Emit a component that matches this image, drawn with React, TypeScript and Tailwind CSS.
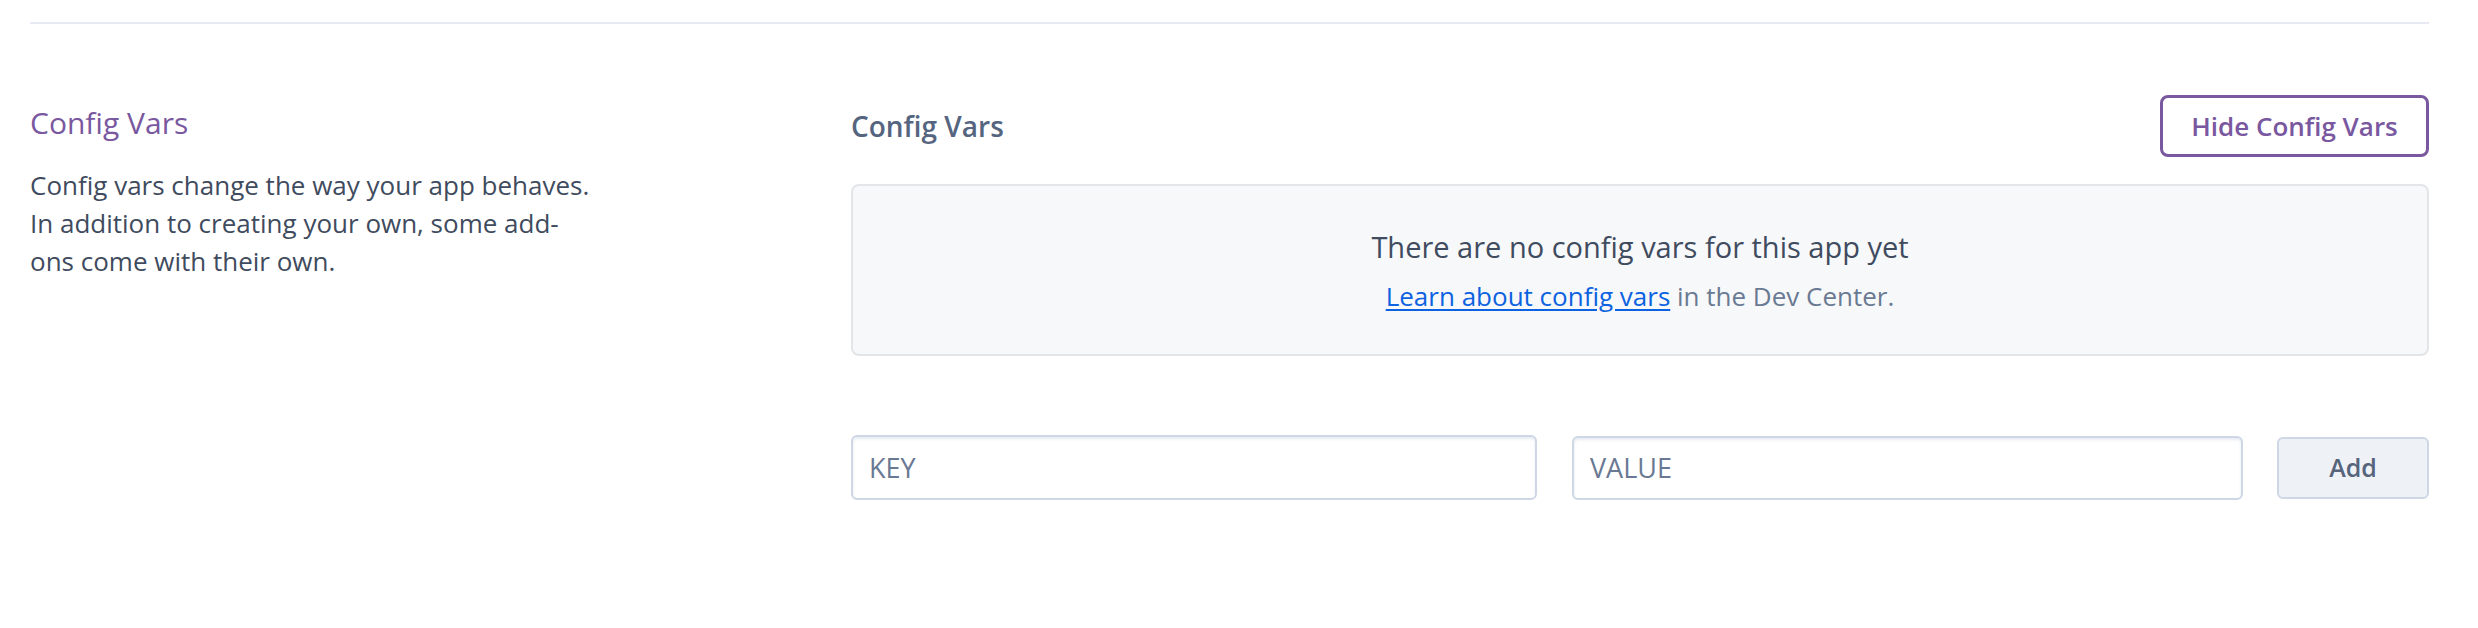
import React from 'react';

const font = { fontFamily: '"Open Sans", Lato, sans-serif' };

export default function App() {
  return (
    <div className="w-full min-h-[628px] bg-white pl-[30px] pr-[49px] pt-[22px]" style={font}>
      {/* top divider */}
      <div className="h-[2px] w-full bg-[#e7eaf4]" />

      <div className="mt-[71px] flex">
        {/* description column */}
        <div className="w-[821px] shrink-0 pt-[9px]">
          <h2 className="text-[30px] leading-[38px] font-normal text-[#79589f]">Config Vars</h2>
          <p className="mt-[24px] w-[560px] text-[26px] leading-[38px] text-[#3f4b5e]">
            Config vars change the way your app behaves. In addition to creating your own, some add-ons come with their own.
          </p>
        </div>

        {/* config vars panel */}
        <div className="flex-1 min-w-0">
          <div className="flex items-center justify-between">
            <h3 className="text-[28px] leading-[34px] font-semibold text-[#56657f]">Config Vars</h3>
            <button className="h-[62px] w-[269px] rounded-[8px] border-[3px] border-[#79589f] bg-white text-[26px] font-semibold text-[#79589f]">
              Hide Config Vars
            </button>
          </div>

          <div className="mt-[27px] flex h-[172px] flex-col items-center justify-center rounded-[8px] border-2 border-[#e3e5e9] bg-[#f7f8fa]">
            <p className="text-[29px] leading-[40px] text-[#3f4b5e]">There are no config vars for this app yet</p>
            <p className="mt-[11px] text-[26px] leading-[36px] text-[#6a7a92]">
              <a href="#" className="text-[#0c62e0] underline underline-offset-[3px]">Learn about config vars</a> in the Dev Center.
            </p>
          </div>

          <div className="mt-[79px] flex items-center">
            <input
              placeholder="KEY"
              className="h-[65px] w-[686px] rounded-[6px] border-2 border-[#cfd7e6] bg-white px-[16px] text-[27px] text-[#3f4b5e] placeholder:text-[#6a7993] shadow-[inset_0_2px_3px_rgba(207,215,230,0.5)] outline-none"
              style={font}
            />
            <input
              placeholder="VALUE"
              className="ml-[35px] h-[64px] flex-1 min-w-0 rounded-[6px] border-2 border-[#cfd7e6] bg-white px-[16px] text-[27px] text-[#3f4b5e] placeholder:text-[#6a7993] shadow-[inset_0_2px_3px_rgba(207,215,230,0.5)] outline-none"
              style={font}
            />
            <button className="ml-[34px] h-[62px] w-[152px] rounded-[6px] border-2 border-[#cfd7e6] bg-[#eef1f6] text-[25px] font-semibold text-[#56647c]">
              Add
            </button>
          </div>
        </div>
      </div>
    </div>
  );
}
